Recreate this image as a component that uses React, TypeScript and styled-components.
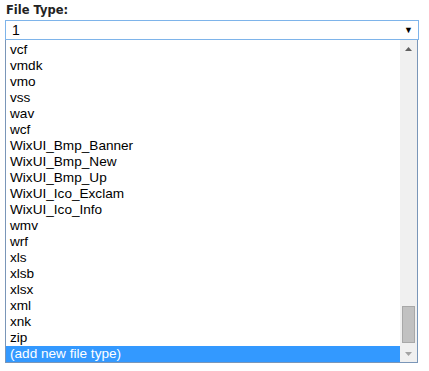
import React from 'react';
import styled, { createGlobalStyle } from 'styled-components';

const GlobalStyle = createGlobalStyle`
  body {
    margin: 0;
    background: #fff;
  }
`;

const Page = styled.div`
  padding: 3px 10px 0 5px;
  width: 414px;
`;

const Label = styled.div`
  font-family: 'DejaVu Sans', Verdana, sans-serif;
  font-weight: bold;
  font-size: 11.5px;
  color: #222;
  height: 17px;
  padding-left: 1px;
`;

const SelectBox = styled.div`
  display: flex;
  align-items: center;
  justify-content: space-between;
  height: 18px;
  border: 1px solid #7eb4ea;
  padding: 0 5px 0 6px;
  font-family: 'Liberation Sans', Arial, sans-serif;
  font-size: 14px;
  color: #000;
`;

const Caret = styled.span`
  font-size: 9px;
  color: #000;
`;

const Dropdown = styled.div`
  display: flex;
  height: 322px;
  margin-right: 1px;
  border: 1px solid #7a96b8;
  border-top: none;
`;

const Options = styled.div`
  flex: 1;
  display: flex;
  flex-direction: column;
  justify-content: flex-end;
  overflow: hidden;
`;

const Option = styled.div<{ $selected?: boolean }>`
  height: 16px;
  line-height: 16px;
  padding-left: 4px;
  font-family: 'Liberation Sans', Arial, sans-serif;
  font-size: 13.6px;
  white-space: nowrap;
  color: ${(p) => (p.$selected ? '#fff' : '#000')};
  background: ${(p) => (p.$selected ? '#3399ff' : 'transparent')};
`;

const Scrollbar = styled.div`
  width: 17px;
  background: #f0f0f0;
  display: flex;
  flex-direction: column;
  align-items: center;
`;

const ArrowButton = styled.div`
  height: 17px;
  width: 17px;
  display: flex;
  align-items: center;
  justify-content: center;
`;

const Track = styled.div`
  flex: 1;
  display: flex;
  flex-direction: column;
  justify-content: flex-end;
  align-items: center;
  padding-bottom: 2px;
`;

const Thumb = styled.div`
  width: 11px;
  height: 35px;
  background: #c1c1c1;
  border: 1px solid #a8a8a8;
`;

const items = [
  'vcf',
  'vmdk',
  'vmo',
  'vss',
  'wav',
  'wcf',
  'WixUI_Bmp_Banner',
  'WixUI_Bmp_New',
  'WixUI_Bmp_Up',
  'WixUI_Ico_Exclam',
  'WixUI_Ico_Info',
  'wmv',
  'wrf',
  'xls',
  'xlsb',
  'xlsx',
  'xml',
  'xnk',
  'zip',
];

function App() {
  return (
    <>
      <GlobalStyle />
      <Page>
        <Label>File Type:</Label>
        <SelectBox>
          <span>1</span>
          <Caret>▼</Caret>
        </SelectBox>
        <Dropdown>
          <Options>
            {items.map((name) => (
              <Option key={name}>{name}</Option>
            ))}
            <Option $selected>(add new file type)</Option>
          </Options>
          <Scrollbar>
            <ArrowButton>
              <svg width="7" height="4" viewBox="0 0 7 4">
                <path d="M0 4 L3.5 0 L7 4 Z" fill="#606060" />
              </svg>
            </ArrowButton>
            <Track>
              <Thumb />
            </Track>
            <ArrowButton>
              <svg width="7" height="4" viewBox="0 0 7 4">
                <path d="M0 0 L3.5 4 L7 0 Z" fill="#a3a3a3" />
              </svg>
            </ArrowButton>
          </Scrollbar>
        </Dropdown>
      </Page>
    </>
  );
}

export default App;
